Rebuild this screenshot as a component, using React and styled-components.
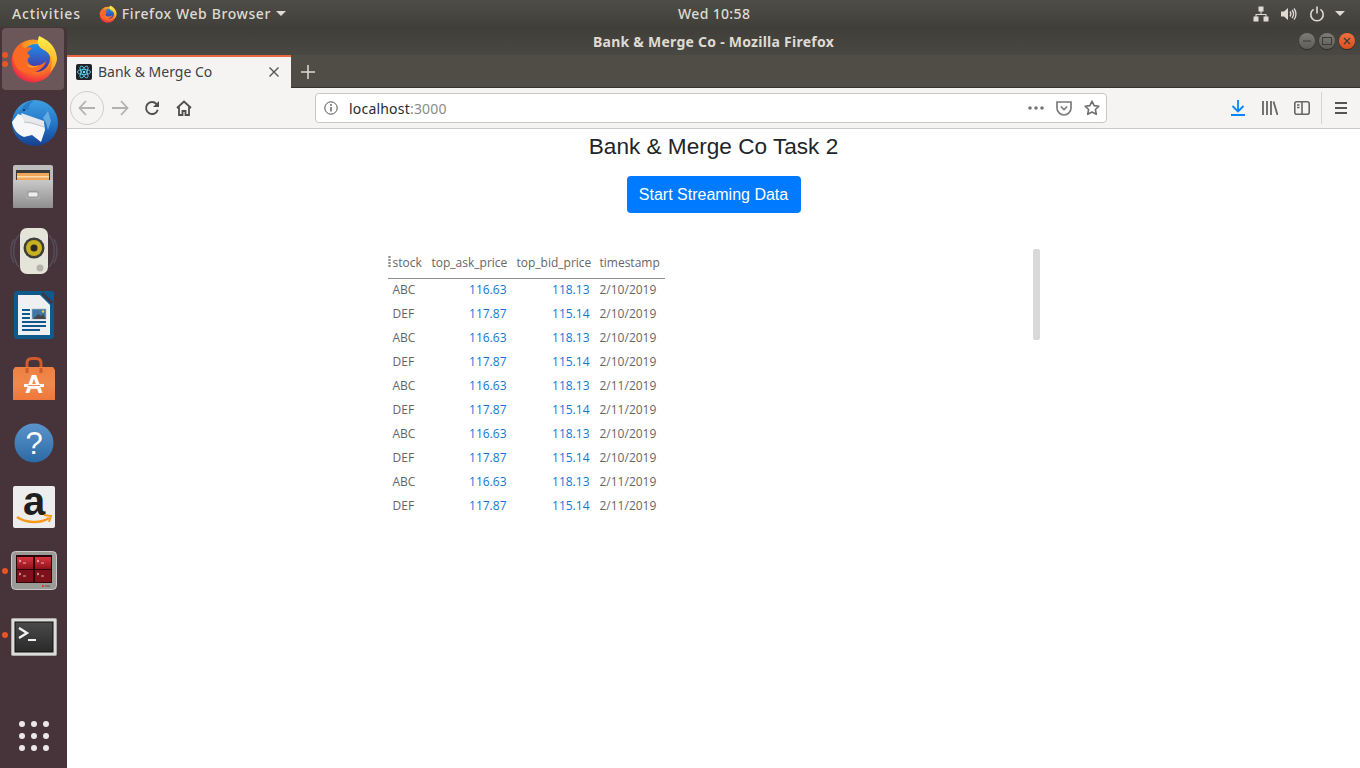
import React from "react"
import styled, { createGlobalStyle } from "styled-components"

const GlobalStyle = createGlobalStyle`
  html, body { margin: 0; padding: 0; height: 100%; overflow: hidden; background: #fff; }
  * { box-sizing: border-box; }
`

const Desktop = styled.div`
  width: 100%;
  height: 100vh;
  display: flex;
  flex-direction: column;
  font-family: "Noto Sans", "Open Sans", sans-serif;
`

const TopBar = styled.div`
  height: 27px;
  flex: none;
  display: grid;
  grid-template-columns: 678px auto 1fr;
  align-items: center;
  background: linear-gradient(#4f4d47, #403f3a);
  color: #dfdbd2;
  font-size: 14px;
  font-weight: 500;
  letter-spacing: 0.35px;
`

const TopLeft = styled.div`
  display: flex;
  align-items: center;
  padding-left: 12px;
`

const Activities = styled.span`
  letter-spacing: 0.85px;
`

const AppMenu = styled.div`
  display: flex;
  align-items: center;
  gap: 5px;
  margin-left: 18px;
  letter-spacing: 0.6px;
`

const Caret = styled.span`
  width: 0;
  height: 0;
  border-left: 5px solid transparent;
  border-right: 5px solid transparent;
  border-top: 5px solid #dfdbd2;
  margin-left: ${p => p.$gap || 0}px;
`

const Tray = styled.div`
  display: flex;
  align-items: center;
  justify-content: flex-end;
  gap: 12px;
  padding-right: 15px;
`

const Body = styled.div`
  flex: 1;
  display: flex;
  min-height: 0;
`

const Dock = styled.div`
  width: 67px;
  flex: none;
  display: flex;
  flex-direction: column;
  background: #47333a;
`

const DockItem = styled.div`
  position: relative;
  height: 64px;
  flex: none;
  display: flex;
  align-items: center;
  justify-content: center;
  padding-top: ${p => p.$drop || 0}px;
  &::before {
    content: "";
    display: ${p => (p.$active ? "block" : "none")};
    position: absolute;
    left: 2px;
    top: 1px;
    width: 62px;
    height: 62px;
    border-radius: 4px;
    background: #6b5659;
  }
  svg { position: relative; }
`

const RunDots = styled.div`
  position: absolute;
  left: 2px;
  top: 0;
  bottom: 0;
  display: flex;
  flex-direction: column;
  justify-content: center;
  gap: 3px;
`

const RunDot = styled.span`
  width: 6px;
  height: 6px;
  border-radius: 50%;
  background: #e95420;
`

const AppGrid = styled.div`
  margin-top: auto;
  height: 64px;
  display: grid;
  grid-template-columns: repeat(3, 6px);
  grid-auto-rows: 6px;
  gap: 6px;
  align-content: center;
  justify-content: center;
`

const AppDot = styled.span`
  border-radius: 50%;
  background: #ece8e8;
`

const Browser = styled.div`
  flex: 1;
  min-width: 0;
  display: flex;
  flex-direction: column;
`

const TitleBar = styled.div`
  position: relative;
  height: 28px;
  flex: none;
  display: flex;
  align-items: center;
  justify-content: center;
  background: linear-gradient(#3f3e39, #4a4842);
  color: #dfdbd2;
  font-size: 14px;
  font-weight: 700;
  letter-spacing: 0.25px;
`

const WindowButtons = styled.div`
  position: absolute;
  right: 5px;
  top: 6px;
  display: flex;
  gap: 4px;
`

const WindowButton = styled.div`
  width: 16px;
  height: 16px;
  border-radius: 50%;
  display: flex;
  align-items: center;
  justify-content: center;
  background: ${p => (p.$close ? "linear-gradient(#f0703f, #dc4f1c)" : "linear-gradient(#7d7c78, #5d5c57)")};
  box-shadow: 0 1px 1px rgba(0, 0, 0, 0.4);
`

const TabStrip = styled.div`
  height: 33px;
  flex: none;
  display: flex;
  align-items: stretch;
  background: #4f4d46;
  box-shadow: inset 0 -1px 0 #33322e;
`

const Tab = styled.div`
  width: 224px;
  display: flex;
  align-items: center;
  padding: 0 12px 2px 9px;
  background: #f5f4f3;
  border-top: 2px solid #e9693f;
  color: #3f4248;
  font-size: 14px;
`

const TabTitle = styled.span`
  flex: 1;
  margin-left: 6px;
`

const NewTab = styled.div`
  width: 34px;
  display: flex;
  align-items: center;
  justify-content: center;
`

const Toolbar = styled.div`
  height: 41px;
  flex: none;
  display: flex;
  align-items: center;
  background: #f5f4f3;
  border-bottom: 1px solid #c9c8c5;
  padding-left: 3px;
`

const BackButton = styled.div`
  width: 34px;
  height: 34px;
  border-radius: 50%;
  border: 1px solid #cfcecc;
  display: flex;
  align-items: center;
  justify-content: center;
`

const NavButton = styled.div`
  width: 32px;
  height: 32px;
  display: flex;
  align-items: center;
  justify-content: center;
  margin-left: ${p => p.$gap || 0}px;
`

const UrlBar = styled.div`
  width: 792px;
  height: 30px;
  margin-left: 115px;
  display: flex;
  align-items: center;
  background: #fff;
  border: 1px solid #c8c7c5;
  border-radius: 4px;
  font-size: 14px;
  padding-left: 8px;
`

const UrlText = styled.div`
  flex: 1;
  margin-left: 11px;
  color: #2a2a2e;
  letter-spacing: 0.2px;
  span { color: #8b8b8d; }
`

const UrlAction = styled.div`
  width: 28px;
  display: flex;
  justify-content: center;
`

const ToolbarSep = styled.div`
  width: 1px;
  height: 32px;
  background: #d5d4d2;
  margin: 0 3px;
`

const Page = styled.div`
  flex: 1;
  min-height: 0;
  background: #fff;
  display: flex;
  flex-direction: column;
  align-items: center;
  font-family: "Liberation Sans", Arial, sans-serif;
`

const Heading = styled.div`
  font-size: 22.6px;
  line-height: 36px;
  color: #212529;
`

const StartButton = styled.button`
  margin-top: 11px;
  height: 37px;
  width: 174px;
  padding: 0;
  border: none;
  border-radius: 4px;
  background: #007bff;
  color: #fff;
  font: 16px "Liberation Sans", Arial, sans-serif;
`

const GridPane = styled.div`
  position: relative;
  width: 652px;
  height: 280px;
  margin-top: 36px;
  font-family: "Open Sans", sans-serif;
`

const ScrollThumb = styled.div`
  position: absolute;
  right: 0;
  top: 0;
  width: 7px;
  height: 91px;
  border-radius: 2px;
  background: #d9d9d9;
`

const DragHandle = styled.div`
  position: absolute;
  left: 0;
  top: 7px;
  display: grid;
  grid-template-columns: 3px;
  grid-auto-rows: 2px;
  gap: 1px;
  span { background: #888; border-radius: 50%; }
`

const StockTable = styled.table`
  border-collapse: collapse;
  table-layout: fixed;
  width: 277px;
  font-size: 12px;
  color: #666;
`

const HeadCell = styled.th`
  width: ${p => p.$w}px;
  height: 29px;
  padding: 0 0 2px 5px;
  font-weight: 400;
  text-align: left;
  white-space: nowrap;
  border-bottom: 1px solid #8f8f8f;
`

const Cell = styled.td`
  height: 24px;
  padding: 0 5px 2px;
  white-space: nowrap;
  text-align: ${p => (p.$num ? "right" : "left")};
  color: ${p => (p.$num ? "#1078d1" : "#666")};
`

const Firefox = ({ size, id }) => (
  <svg width={size} height={size} viewBox="0 0 48 48">
    <defs>
      <radialGradient id={id + "a"} cx="0.6" cy="0.3" r="0.85">
        <stop offset="0" stopColor="#ffd53a" />
        <stop offset="0.45" stopColor="#ff8a1e" />
        <stop offset="0.8" stopColor="#f0333f" />
        <stop offset="1" stopColor="#d5197a" />
      </radialGradient>
      <linearGradient id={id + "b"} x1="0" y1="0" x2="0" y2="1">
        <stop offset="0" stopColor="#1f8fe8" />
        <stop offset="1" stopColor="#4a2d9e" />
      </linearGradient>
      <linearGradient id={id + "c"} x1="0.5" y1="0" x2="0.5" y2="1">
        <stop offset="0" stopColor="#fff14a" />
        <stop offset="1" stopColor="#ffa31f" />
      </linearGradient>
    </defs>
    <circle cx="23" cy="26" r="21.5" fill={`url(#${id}a)`} />
    <circle cx="26" cy="23" r="14" fill={`url(#${id}b)`} />
    <path d="M3 21c2-7 6-11 9-12 0 2 1 3 3 4 2-1 5-1 7 0-1 2-4 3-5 5 1 1 3 2 3 4-2 1-3 2-2 5 2 4 7 5 12 3 3-1 5-3 6-4-1 6-8 12-17 12C9 38 3 30 3 21z" fill="#fb6a24" />
    <path d="M29 1c7 3 17 9 18 22 0 5-3 11-7 14 3-8 2-15-3-20-2-2-6-3-8-6-2-3-1-7 0-10z" fill={`url(#${id}c)`} />
    <path d="M17 29c3 3 8 3 12 1-3 3-10 4-12-1z" fill="#ffb52e" />
  </svg>
)

const Thunderbird = () => (
  <svg width="48" height="48" viewBox="0 0 48 48">
    <defs>
      <linearGradient id="tb" x1="0" y1="0" x2="0" y2="1">
        <stop offset="0" stopColor="#3f9fe2" />
        <stop offset="0.6" stopColor="#1f6fc2" />
        <stop offset="1" stopColor="#17408f" />
      </linearGradient>
    </defs>
    <circle cx="25" cy="24" r="23" fill="url(#tb)" />
    <path d="M9 17C11 7 18 1 24 2c-5 3-6 6-5 8-4 1-7 4-10 7z" fill="#2a7cc8" />
    <path d="M2 23l6-8 26 9 1 7-4 12-9-7-8 2C8 36 3 30 2 23z" fill="#f7f7f7" />
    <path d="M11 14l3 9 20 5V22z" fill="#e6e8eb" />
    <path d="M14 23l8 1 12 4" fill="none" stroke="#b6bbc3" strokeWidth="0.8" />
    <path d="M38 12l3 10-3 9-2-7-3-5z" fill="#7fbdea" opacity="0.7" />
    <circle cx="14" cy="11" r="1" fill="#102a4a" />
  </svg>
)

const Files = () => (
  <svg width="44" height="46" viewBox="0 0 44 46">
    <defs>
      <linearGradient id="cab" x1="0" y1="0" x2="0" y2="1">
        <stop offset="0" stopColor="#c9c9c9" />
        <stop offset="1" stopColor="#8e8e8e" />
      </linearGradient>
    </defs>
    <rect x="1" y="1" width="40" height="43" rx="2" fill="#bdbdbd" />
    <rect x="4" y="6" width="34" height="16" fill="#3a3a3a" />
    <rect x="5" y="9" width="32" height="7" fill="#f2a65a" />
    <rect x="5" y="12" width="32" height="1.5" fill="#f9dcb0" />
    <rect x="1" y="16" width="40" height="28" rx="1" fill="url(#cab)" />
    <rect x="14" y="26" width="14" height="9" rx="1.5" fill="#adadad" />
    <rect x="16" y="28" width="10" height="5" rx="1" fill="#ececec" stroke="#6e6e6e" strokeWidth="0.6" />
  </svg>
)

const Speaker = () => (
  <svg width="48" height="48" viewBox="0 0 48 48">
    <path d="M9 8c-7 8-7 24 0 32M4 12c-4 7-4 17 0 24M39 8c7 8 7 24 0 32M44 12c4 7 4 17 0 24" fill="none" stroke="#6d7f96" strokeWidth="1.5" opacity="0.35" />
    <rect x="10" y="1" width="28" height="46" rx="7" fill="#e4e4d8" />
    <circle cx="24" cy="21" r="10.5" fill="#3d3d3a" />
    <circle cx="24" cy="21" r="8" fill="#c9b020" />
    <circle cx="24" cy="21" r="3.5" fill="#2a2a28" />
    <circle cx="30" cy="41" r="3.5" fill="#b4b4aa" />
  </svg>
)

const Writer = () => (
  <svg width="40" height="48" viewBox="0 0 40 48">
    <path d="M3 0h25l12 12v33a3 3 0 0 1-3 3H3a3 3 0 0 1-3-3V3a3 3 0 0 1 3-3z" fill="#0e5a8a" />
    <path d="M28 0h9a3 3 0 0 1 3 3v9z" fill="#0e5a8a" />
    <path d="M4 4h22l10 10v30H4z" fill="#eef0f1" />
    <path d="M28 2l10 10" stroke="#47333a" strokeWidth="2.4" />
    <path d="M8 19h8M8 23h8M8 27h8M8 31h24M8 35h24M8 39h18" stroke="#11598a" strokeWidth="2" />
    <rect x="18" y="18" width="14" height="10" fill="#3f78a8" stroke="#aebac4" strokeWidth="0.6" />
    <path d="M19 28l5-5 3 2 2-2 3 5z" fill="#46484a" />
    <circle cx="29" cy="20.5" r="1.3" fill="#f2c53d" />
  </svg>
)

const Software = () => (
  <svg width="44" height="44" viewBox="0 0 44 44">
    <defs>
      <linearGradient id="bag" x1="0" y1="0" x2="0" y2="1">
        <stop offset="0" stopColor="#ec7f42" />
        <stop offset="0.5" stopColor="#f08a4b" />
        <stop offset="1" stopColor="#f0763a" />
      </linearGradient>
    </defs>
    <path d="M15 16V6c0-3 2-4.5 5-4.5h4c3 0 5 1.500 5 4.500v10" fill="none" stroke="#cf5a2c" strokeWidth="3" />
    <path d="M3 10h38l2 3v30H1V13z" fill="url(#bag)" />
    <path d="M15 16V11M29 16V11" stroke="#cf5a2c" strokeWidth="3" />
    <text x="22" y="36" textAnchor="middle" fontFamily="Liberation Sans" fontWeight="700" fontSize="25" fill="#fff">A</text>
    <rect x="12" y="27" width="20" height="3" fill="#fff" />
    <rect x="16" y="28" width="12" height="1" fill="#f08a4b" />
  </svg>
)

const Help = () => (
  <svg width="40" height="40" viewBox="0 0 40 40">
    <defs>
      <linearGradient id="hlp" x1="0" y1="0" x2="0" y2="1">
        <stop offset="0" stopColor="#5b94cc" />
        <stop offset="1" stopColor="#2c6aa5" />
      </linearGradient>
    </defs>
    <circle cx="20" cy="20" r="19.5" fill="url(#hlp)" />
    <text x="20" y="31" textAnchor="middle" fontFamily="Liberation Sans" fontSize="31" fill="#fff">?</text>
  </svg>
)

const Amazon = () => (
  <svg width="42" height="62" viewBox="0 -10 42 62">
    <rect width="42" height="42" rx="2" fill="#ededed" />
    <text x="21" y="29" textAnchor="middle" fontFamily="Liberation Sans" fontWeight="700" fontSize="40" fill="#1f1f1f">a</text>
    <path d="M4 31c9 6 23 7 32 1" fill="none" stroke="#f39a1d" strokeWidth="2.6" />
    <path d="M31 29l7 1-2 6" fill="none" stroke="#f39a1d" strokeWidth="2" />
  </svg>
)

const Workspaces = () => (
  <svg width="46" height="40" viewBox="0 0 46 40">
    <defs>
      <linearGradient id="wsp" x1="0" y1="0" x2="0" y2="1">
        <stop offset="0" stopColor="#d8353f" />
        <stop offset="1" stopColor="#8e121c" />
      </linearGradient>
    </defs>
    <rect x="0.5" y="0.5" width="45" height="38" rx="4" fill="#9a9a96" stroke="#c9c9c5" />
    <rect x="5" y="4" width="36" height="28" fill="#2c0508" />
    <rect x="6" y="6" width="16" height="12" fill="url(#wsp)" />
    <rect x="24" y="6" width="16" height="12" fill="url(#wsp)" />
    <rect x="6" y="19" width="16" height="12" fill="#7d1019" />
    <rect x="24" y="19" width="16" height="12" fill="#7d1019" />
    <path d="M8 9l2 1-2 1M12 12h3M26 9l2 1-2 1M30 12h3M8 22l2 1-2 1M12 25h3M26 22l2 1-2 1M30 25h3" stroke="#f3d7d9" strokeWidth="0.8" fill="none" />
    <rect x="31" y="34" width="2" height="2" fill="#e32" />
    <rect x="34" y="34" width="5" height="2" fill="#777" />
  </svg>
)

const TerminalIcon = () => (
  <svg width="46" height="38" viewBox="0 0 46 38">
    <defs>
      <linearGradient id="term" x1="0" y1="0" x2="0" y2="1">
        <stop offset="0" stopColor="#4a4a4a" />
        <stop offset="1" stopColor="#2a2a2a" />
      </linearGradient>
    </defs>
    <rect x="0.5" y="0.5" width="45" height="37" rx="1" fill="#dcdcda" stroke="#a9a9a7" />
    <rect x="4" y="4" width="38" height="30" fill="url(#term)" stroke="#111" />
    <path d="M8 10l8 5-8 5" fill="none" stroke="#f2f2f2" strokeWidth="2.4" />
    <path d="M17 22h8" stroke="#f2f2f2" strokeWidth="2" />
  </svg>
)

const ReactFavicon = () => (
  <svg width="16" height="16" viewBox="0 0 16 16">
    <rect width="16" height="16" rx="2" fill="#20232a" />
    <g fill="none" stroke="#61dafb" strokeWidth="0.8">
      <ellipse cx="8" cy="8" rx="6.6" ry="2.6" />
      <ellipse cx="8" cy="8" rx="6.6" ry="2.6" transform="rotate(60 8 8)" />
      <ellipse cx="8" cy="8" rx="6.6" ry="2.6" transform="rotate(120 8 8)" />
    </g>
    <circle cx="8" cy="8" r="1.3" fill="#61dafb" />
  </svg>
)

const Network = () => (
  <svg width="16" height="16" viewBox="0 0 16 16" fill="#dfdbd2">
    <rect x="5.5" y="0.5" width="5" height="5" />
    <rect x="0.5" y="10.5" width="5" height="5" />
    <rect x="10.5" y="10.5" width="5" height="5" />
    <path d="M7.5 5h1v3h5v3h-1V9h-9v2h-1V8h5z" />
  </svg>
)

const Volume = () => (
  <svg width="16" height="16" viewBox="0 0 16 16">
    <path d="M0 5.5h3L7 2v12l-4-3.5H0z" fill="#dfdbd2" />
    <path d="M9 5.5c1 1.4 1 3.6 0 5M11 4c1.8 2.3 1.8 5.7 0 8M13 2.5c2.6 3.2 2.6 7.8 0 11" fill="none" stroke="#dfdbd2" strokeWidth="1.3" />
  </svg>
)

const Power = () => (
  <svg width="16" height="16" viewBox="0 0 16 16" fill="none" stroke="#dfdbd2" strokeWidth="1.6">
    <path d="M4.6 3.4a6.2 6.2 0 1 0 6.8 0" />
    <path d="M8 0.5v7" />
  </svg>
)

const Back = () => (
  <svg width="18" height="16" viewBox="0 0 18 16" fill="none" stroke="#b1b1b1" strokeWidth="1.8">
    <path d="M8 1L1.5 8 8 15M2 8h15" />
  </svg>
)

const Forward = () => (
  <svg width="18" height="16" viewBox="0 0 18 16" fill="none" stroke="#b1b1b1" strokeWidth="1.8">
    <path d="M10 1l6.5 7-6.5 7M16 8H1" />
  </svg>
)

const Reload = () => (
  <svg width="16" height="16" viewBox="0 0 16 16" fill="none" stroke="#4f4f4f" strokeWidth="1.9">
    <path d="M13.8 9.8A6 6 0 1 1 12.5 4" />
    <path d="M15 1v6H9z" fill="#4f4f4f" stroke="none" />
  </svg>
)

const Home = () => (
  <svg width="16" height="16" viewBox="0 0 16 16" fill="none" stroke="#4f4f4f" strokeWidth="1.8">
    <path d="M1 8l7-6.500L15 8M3 7v8h3.500v-4h3v4H13V7" />
  </svg>
)

const Info = () => (
  <svg width="14" height="14" viewBox="0 0 14 14" fill="none" stroke="#555" strokeWidth="1">
    <circle cx="7" cy="7" r="6.2" />
    <path d="M7 6v4.500" strokeWidth="1.4" />
    <circle cx="7" cy="3.9" r="0.9" fill="#555" stroke="none" />
  </svg>
)

const More = () => (
  <svg width="16" height="4" viewBox="0 0 16 4" fill="#777">
    <circle cx="2" cy="2" r="1.8" />
    <circle cx="8" cy="2" r="1.8" />
    <circle cx="14" cy="2" r="1.8" />
  </svg>
)

const Pocket = () => (
  <svg width="16" height="15" viewBox="0 0 16 15" fill="none" stroke="#7c7c7c" strokeWidth="1.7">
    <path d="M1 1h14v6a7 7 0 0 1-14 0z" />
    <path d="M4.8 5.500L8 8.500l3.200-3" />
  </svg>
)

const Star = () => (
  <svg width="16" height="16" viewBox="0 0 16 16" fill="none" stroke="#6f6f6f" strokeWidth="1.6" strokeLinejoin="round">
    <path d="M8 1.200l2.100 4.400 4.800.6-3.500 3.300.9 4.800L8 12l-4.300 2.300.9-4.800L1.100 6.200l4.800-.6z" />
  </svg>
)

const Download = () => (
  <svg width="14" height="16" viewBox="0 0 14 16" fill="none" stroke="#0a84ff" strokeWidth="1.8">
    <path d="M7 0v11M1.500 6L7 11.500 12.500 6M0 15h14" />
  </svg>
)

const Library = () => (
  <svg width="16" height="14" viewBox="0 0 16 14" fill="none" stroke="#666" strokeWidth="1.8">
    <path d="M1 0v14M5 0v14M9 0v14M11.500 0.500l4 13.500" />
  </svg>
)

const Sidebar = () => (
  <svg width="16" height="14" viewBox="0 0 16 14" fill="none" stroke="#666" strokeWidth="1.6">
    <rect x="0.8" y="0.8" width="14.4" height="12.4" rx="2" />
    <path d="M8 1v12M3 4h2.500M3 6.500h2.500" />
  </svg>
)

const Menu = () => (
  <svg width="12" height="12" viewBox="0 0 12 12" stroke="#555" strokeWidth="1.8">
    <path d="M0 1h12M0 6h12M0 11h12" />
  </svg>
)

const dockApps = [
  { icon: <Firefox size={48} id="ffd" />, active: true, runs: 2 },
  { icon: <Thunderbird /> },
  { icon: <Files /> },
  { icon: <Speaker /> },
  { icon: <Writer /> },
  { icon: <Software /> },
  { icon: <Help /> },
  { icon: <Amazon /> },
  { icon: <Workspaces />, runs: 1 },
  { icon: <TerminalIcon />, runs: 1, drop: 4 },
]

const days = [10, 10, 10, 10, 11, 11, 10, 10, 11, 11]

const rows = days.map((day, i) => ({
  stock: i % 2 ? "DEF" : "ABC",
  ask: i % 2 ? "117.87" : "116.63",
  bid: i % 2 ? "115.14" : "118.13",
  date: `2/${day}/2019`,
}))

const App = () => (
  <Desktop>
    <GlobalStyle />
    <TopBar>
      <TopLeft>
        <Activities>Activities</Activities>
        <AppMenu>
          <Firefox size={18} id="fft" />
          Firefox Web Browser
          <Caret />
        </AppMenu>
      </TopLeft>
      <div>Wed 10:58</div>
      <Tray>
        <Network />
        <Volume />
        <Power />
        <Caret $gap={-2} />
      </Tray>
    </TopBar>
    <Body>
      <Dock>
        {dockApps.map((app, i) => (
          <DockItem key={i} $active={app.active} $drop={app.drop}>
            {app.runs && (
              <RunDots>
                {Array.from({ length: app.runs }, (_, n) => <RunDot key={n} />)}
              </RunDots>
            )}
            {app.icon}
          </DockItem>
        ))}
        <AppGrid>
          {Array.from({ length: 9 }, (_, i) => <AppDot key={i} />)}
        </AppGrid>
      </Dock>
      <Browser>
        <TitleBar>
          Bank &amp; Merge Co - Mozilla Firefox
          <WindowButtons>
            <WindowButton>
              <svg width="8" height="8" viewBox="0 0 8 8"><path d="M0 4h8" stroke="#3c3b37" strokeWidth="1" /></svg>
            </WindowButton>
            <WindowButton>
              <svg width="10" height="8" viewBox="0 0 10 8"><rect x="0.5" y="0.5" width="9" height="7" fill="none" stroke="#3c3b37" /></svg>
            </WindowButton>
            <WindowButton $close>
              <svg width="8" height="8" viewBox="0 0 8 8"><path d="M1 1l6 6M7 1L1 7" stroke="#3c3b37" strokeWidth="1.2" /></svg>
            </WindowButton>
          </WindowButtons>
        </TitleBar>
        <TabStrip>
          <Tab>
            <ReactFavicon />
            <TabTitle>Bank &amp; Merge Co</TabTitle>
            <svg width="10" height="10" viewBox="0 0 10 10"><path d="M0.5 0.5l9 9M9.500 0.500l-9 9" stroke="#555" strokeWidth="1.4" /></svg>
          </Tab>
          <NewTab>
            <svg width="14" height="14" viewBox="0 0 14 14"><path d="M7 0v14M0 7h14" stroke="#dfdbd2" strokeWidth="1.5" /></svg>
          </NewTab>
        </TabStrip>
        <Toolbar>
          <BackButton><Back /></BackButton>
          <NavButton><Forward /></NavButton>
          <NavButton><Reload /></NavButton>
          <NavButton><Home /></NavButton>
          <UrlBar>
            <Info />
            <UrlText>localhost<span>:3000</span></UrlText>
            <UrlAction><More /></UrlAction>
            <UrlAction><Pocket /></UrlAction>
            <UrlAction><Star /></UrlAction>
          </UrlBar>
          <NavButton $gap={115}><Download /></NavButton>
          <NavButton><Library /></NavButton>
          <NavButton><Sidebar /></NavButton>
          <ToolbarSep />
          <NavButton><Menu /></NavButton>
        </Toolbar>
        <Page>
          <Heading>Bank &amp; Merge Co Task 2</Heading>
          <StartButton>Start Streaming Data</StartButton>
          <GridPane>
            <DragHandle><span /><span /><span /><span /></DragHandle>
            <StockTable>
              <thead>
                <tr>
                  <HeadCell $w={39}>stock</HeadCell>
                  <HeadCell $w={85}>top_ask_price</HeadCell>
                  <HeadCell $w={83}>top_bid_price</HeadCell>
                  <HeadCell $w={70}>timestamp</HeadCell>
                </tr>
              </thead>
              <tbody>
                {rows.map((row, i) => (
                  <tr key={i}>
                    <Cell>{row.stock}</Cell>
                    <Cell $num>{row.ask}</Cell>
                    <Cell $num>{row.bid}</Cell>
                    <Cell>{row.date}</Cell>
                  </tr>
                ))}
              </tbody>
            </StockTable>
            <ScrollThumb />
          </GridPane>
        </Page>
      </Browser>
    </Body>
  </Desktop>
)

export default App
